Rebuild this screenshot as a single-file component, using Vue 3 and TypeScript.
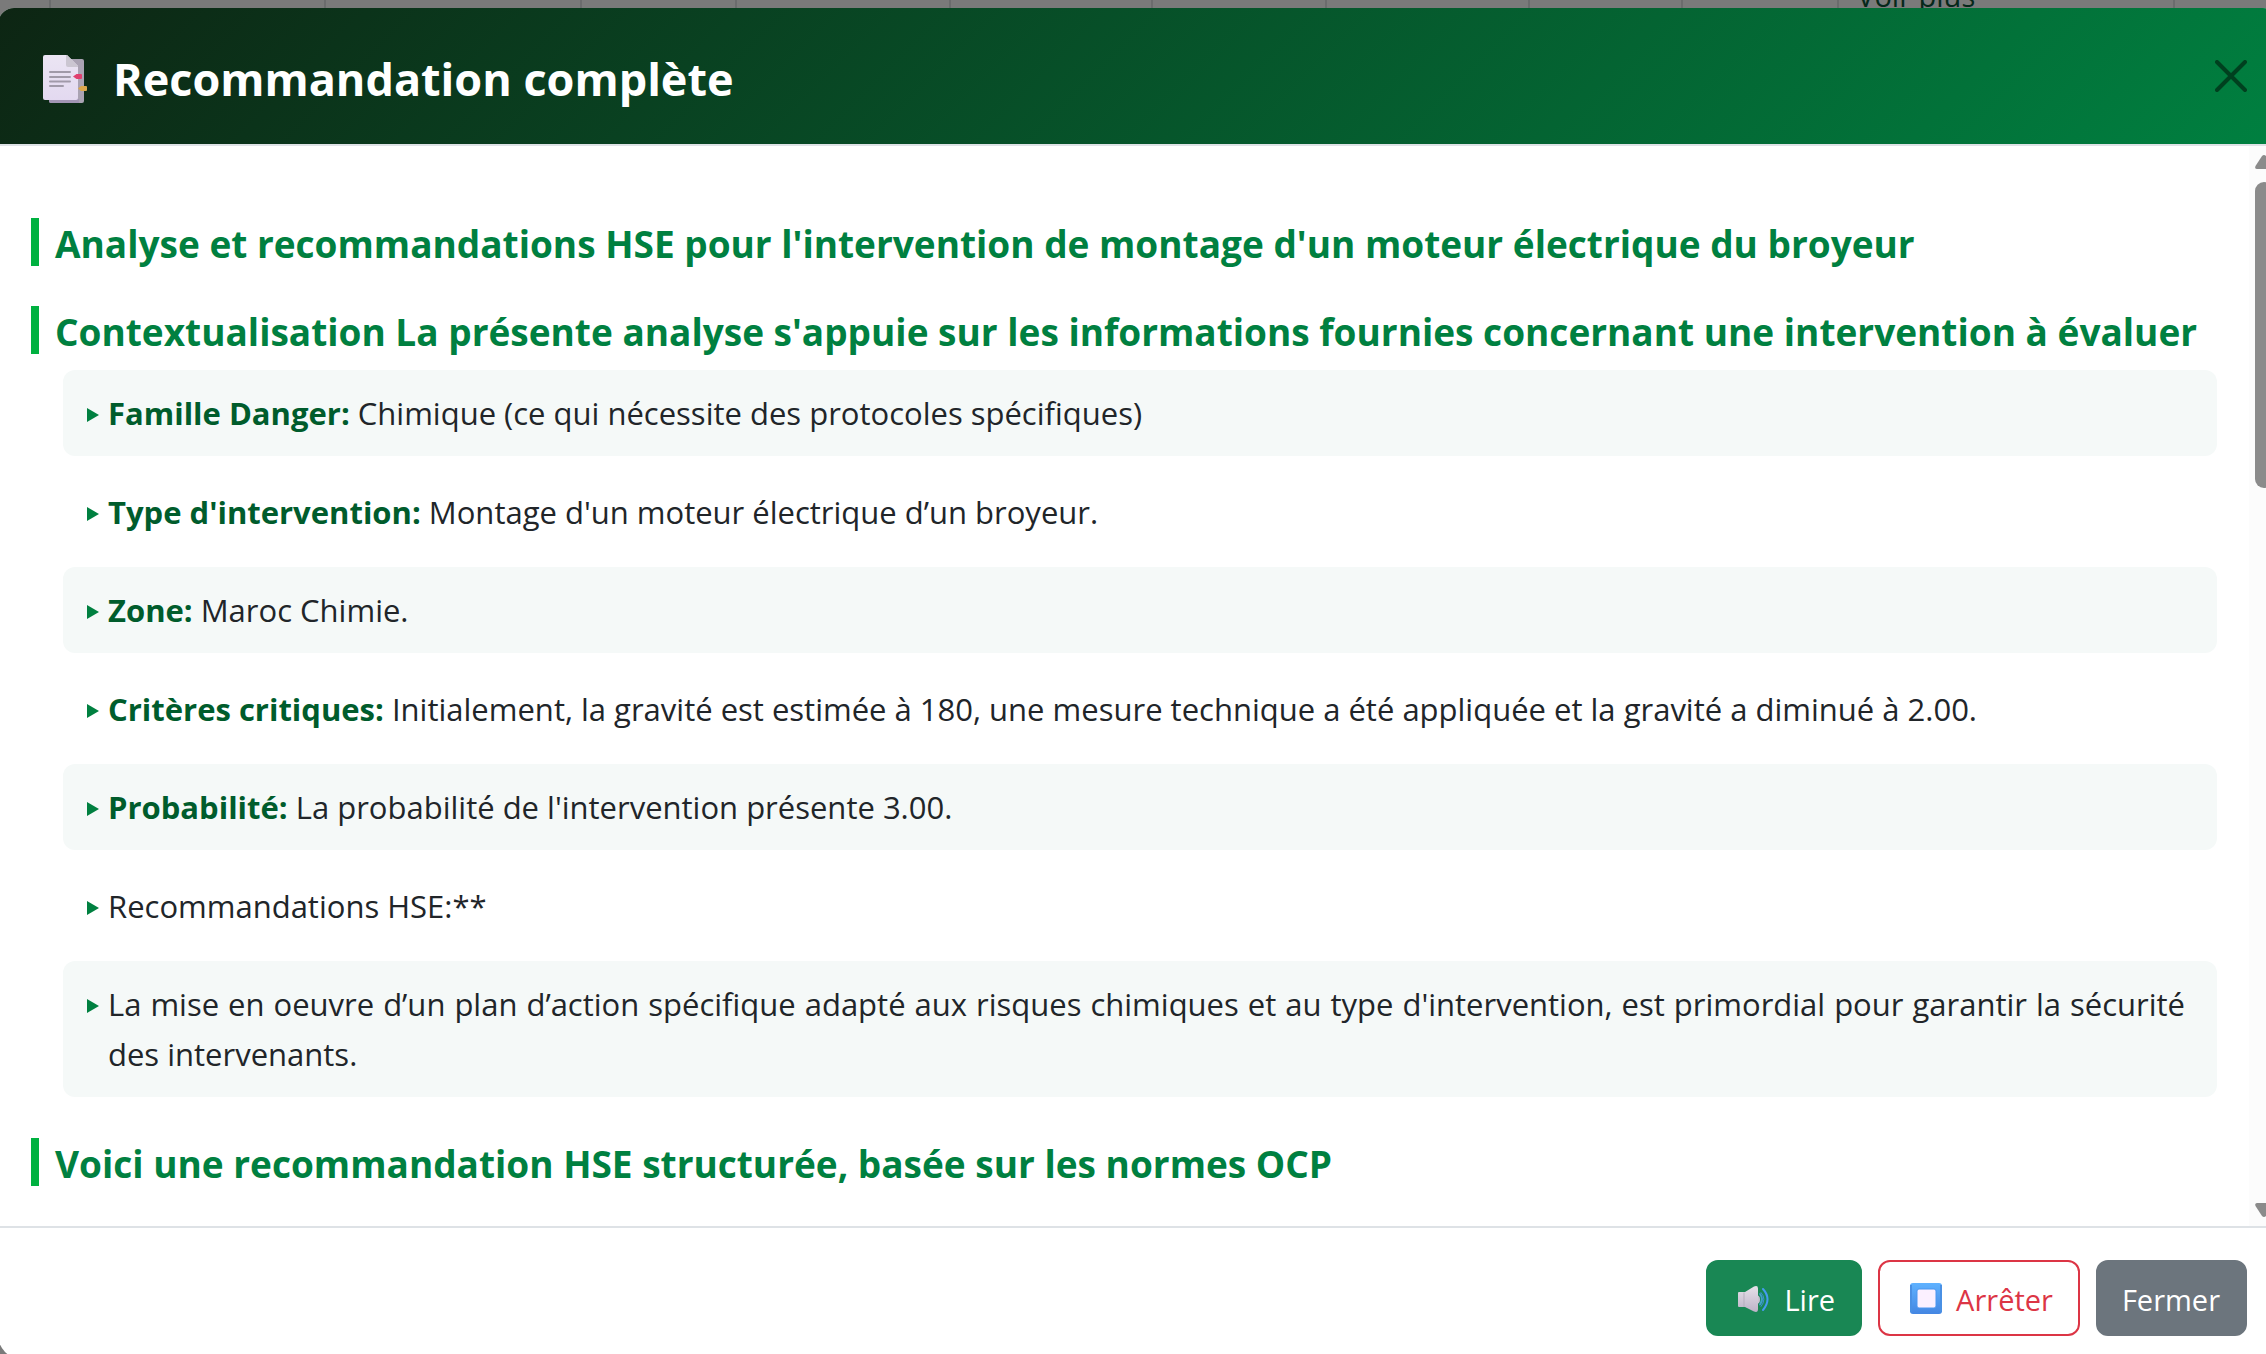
<script setup lang="ts">
interface Item {
  label?: string
  text: string
}

const columnWidths: number[] = [50, 275, 256, 155, 214, 203, 174, 203, 153, 156, 336, 104]

const introHeadings: string[] = [
  "Analyse et recommandations HSE pour l'intervention de montage d'un moteur électrique du broyeur",
  "Contextualisation La présente analyse s'appuie sur les informations fournies concernant une intervention à évaluer",
]

const items: Item[] = [
  { label: 'Famille Danger:', text: 'Chimique (ce qui nécessite des protocoles spécifiques)' },
  { label: "Type d'intervention:", text: "Montage d'un moteur électrique d’un broyeur." },
  { label: 'Zone:', text: 'Maroc Chimie.' },
  {
    label: 'Critères critiques:',
    text: 'Initialement, la gravité est estimée à 180, une mesure technique a été appliquée et la gravité a diminué à 2.00.',
  },
  { label: 'Probabilité:', text: "La probabilité de l'intervention présente 3.00." },
  { text: 'Recommandations HSE:**' },
  {
    text: "La mise en oeuvre d’un plan d’action spécifique adapté aux risques chimiques et au type d'intervention, est primordial pour garantir la sécurité des intervenants.",
  },
]
</script>

<template>
  <div class="page">
    <table class="backdrop" aria-hidden="true">
      <tbody>
        <tr>
          <td v-for="(w, i) in columnWidths" :key="i" :style="{ width: (w / 2279) * 100 + '%' }">
            <span v-if="i === 10">Voir plus</span>
          </td>
        </tr>
      </tbody>
    </table>

    <section class="modal" role="dialog" aria-modal="true" aria-labelledby="modal-title">
      <header class="modal-header">
        <svg class="doc-icon" viewBox="0 0 44 48" aria-hidden="true">
          <defs>
            <linearGradient id="sheet" x1="0" y1="0" x2="0" y2="1">
              <stop offset="0" stop-color="#ebe5f3" />
              <stop offset="1" stop-color="#e3d9f0" />
            </linearGradient>
          </defs>
          <rect x="6" y="4" width="35" height="44" rx="2" fill="#aaa3b3" />
          <path d="M6 44h30v4H8q-2 0-2-2z" fill="#a295b4" />
          <path d="M2 0H24L35 11V43q0 2-2 2H2q-2 0-2-2V2Q0 0 2 0z" fill="url(#sheet)" />
          <path d="M24 0L35 11V12H25q-2 0-2-2V0z" fill="#cbc6d1" />
          <path d="M7 17H27M7 22H27M7 26.500H27M7 31H20" stroke="#a19aa9" stroke-width="2" stroke-linecap="round" />
          <path d="M30 21.500L33.500 19H38q1 0 1 1v3q0 1-1 1H33.500z" fill="#e0406f" />
          <path d="M35 33.500L38 31H43q1 0 1 1v3q0 1-1 1H38z" fill="#dba84c" />
        </svg>
        <h1 id="modal-title">Recommandation complète</h1>
        <button class="close" type="button" aria-label="Fermer la fenêtre">
          <svg viewBox="0 0 32 32" aria-hidden="true">
            <path d="M2 2L30 30M30 2L2 30" stroke="#00401f" stroke-width="4" stroke-linecap="round" />
          </svg>
        </button>
      </header>

      <div class="modal-body">
        <main class="content">
          <h2 v-for="h in introHeadings" :key="h">{{ h }}</h2>
          <ul>
            <li v-for="item in items" :key="item.text">
              <p><strong v-if="item.label">{{ item.label }}</strong> {{ item.text }}</p>
            </li>
          </ul>
          <h2>Voici une recommandation HSE structurée, basée sur les normes OCP</h2>
        </main>
        <div class="scrollbar" aria-hidden="true">
          <svg viewBox="0 0 18 14"><path d="M7 1Q9-1 11 1L17.500 11Q18.500 14 16 14H2Q-.5 14 .5 11z" fill="#8b8b8b" /></svg>
          <div class="track"><div class="thumb"></div></div>
          <svg viewBox="0 0 18 14"><path d="M7 13Q9 15 11 13L17.500 3Q18.500 0 16 0H2Q-.5 0 .5 3z" fill="#8b8b8b" /></svg>
        </div>
      </div>

      <footer class="modal-footer">
        <button class="btn read" type="button">
          <svg viewBox="0 0 32 32" aria-hidden="true">
            <defs>
              <linearGradient id="cone" x1="0" y1="0" x2="0" y2="1">
                <stop offset="0" stop-color="#e6e1e9" />
                <stop offset="1" stop-color="#bdb2c8" />
              </linearGradient>
            </defs>
            <path d="M18 12q4 0 4 4.500T18 21z" fill="#c9c2d0" />
            <path d="M1 9H7L16 3.500q4-1.500 4 2V26q0 4-4 2.500L7 24H1q-1 0-1-1V10q0-1 1-1z" fill="url(#cone)" />
            <path d="M6 9.500V24" stroke="#b5adbd" stroke-width="1" />
            <path d="M22 11q4 5 0 10.500" fill="none" stroke="#3f9fc8" stroke-width="2" stroke-linecap="round" />
            <path d="M25 6q9 10 0 21" fill="none" stroke="#459bf0" stroke-width="2" stroke-linecap="round" />
            <path d="M23 9.500q6 6.500 0 14" fill="none" stroke="#3c8fd8" stroke-width="1" stroke-linecap="round" />
          </svg>
          Lire
        </button>
        <button class="btn stop" type="button">
          <svg viewBox="0 0 32 32" aria-hidden="true">
            <defs>
              <linearGradient id="key" x1="0" y1="0" x2="0" y2="1">
                <stop offset="0" stop-color="#5fb2ff" />
                <stop offset="1" stop-color="#4486e2" />
              </linearGradient>
            </defs>
            <rect x="0" y="0" width="32" height="31" rx="3" fill="url(#key)" />
            <path d="M1 2V29M31 2V29" stroke="#4a90e4" stroke-width="2" />
            <rect x="7" y="6" width="19" height="19" rx="2" fill="#fbf0ff" stroke="#4a96f0" stroke-width="1" />
          </svg>
          Arrêter
        </button>
        <button class="btn dismiss" type="button">Fermer</button>
      </footer>
    </section>
  </div>
</template>

<style>
body {
  margin: 0;
  overflow: hidden;
  background: #7a7a7a;
}
</style>

<style scoped>
.page {
  position: relative;
  height: 100vh;
  overflow: hidden;
  background: #7a7a7a;
  color: #212529;
  font-family: "Open Sans", "Noto Sans", sans-serif;
}

.backdrop {
  position: absolute;
  top: -28px;
  left: 0;
  width: calc(100% + 13px);
  table-layout: fixed;
  border-collapse: collapse;
  font-size: 29px;
  line-height: 44px;
  color: #06281a;
}

.backdrop td {
  height: 48px;
  padding: 0 18px;
  box-sizing: border-box;
  border-right: 2px solid #6b6c6d;
}

/* The dialog runs slightly past both sides and the bottom of the window. */
.modal {
  position: relative;
  display: flex;
  flex-direction: column;
  box-sizing: border-box;
  height: calc(100vh - 3px);
  margin: 0 -13px 0 -2px;
  top: 8px;
  overflow: hidden;
  border-radius: 16px 16px 24px 24px;
  background: #fff;
}

.modal-header {
  display: flex;
  align-items: center;
  gap: 26px;
  height: 136px;
  flex: none;
  padding: 0 32px 0 45px;
  border-bottom: 2px solid #dee2e6;
  background: linear-gradient(135deg, #0d2513, #008040);
}

.doc-icon {
  width: 44px;
  height: 48px;
  margin-top: 6px;
}

h1 {
  flex: 1;
  margin: 0;
  padding-top: 6px;
  color: #fff;
  font-size: 45px;
  line-height: 60px;
  font-weight: 700;
}

.close {
  display: flex;
  padding: 0;
  border: 0;
  background: none;
}

.close svg {
  width: 32px;
  height: 32px;
}

.modal-body {
  display: flex;
  flex: 1;
  min-height: 0;
}

.content {
  flex: 1;
  min-width: 0;
  padding: 72px 32px 0 33px;
  overflow: hidden;
}

h2 {
  margin: 0 -32px 40px 0;
  padding: 4px 0 0 16px;
  border-left: 8px solid #00b140;
  color: #008040;
  font-size: 37px;
  line-height: 44px;
  font-weight: 700;
}

ul {
  margin: -24px 0 41px 32px;
  padding: 0;
  list-style: none;
}

li {
  display: flex;
  gap: 9px;
  margin-bottom: 12px;
  padding: 18px 32px 18px 24px;
  border-radius: 12px;
}

li:nth-child(odd) {
  margin-bottom: 13px;
  background: #f5f9f8;
}

li:last-child {
  margin-bottom: 0;
}

li::before {
  content: "";
  flex: none;
  width: 12px;
  height: 14px;
  margin-top: 20px;
  background: #008040;
  clip-path: polygon(0 0, 100% 50%, 0 100%);
}

p {
  flex: 1;
  margin: 0;
  font-size: 31px;
  line-height: 50px;
  text-align: justify;
}

strong {
  color: #005c2c;
  font-weight: 700;
}

.scrollbar {
  display: flex;
  flex-direction: column;
  align-items: center;
  flex: none;
  width: 30px;
  box-sizing: border-box;
  padding: 9px 0;
  background: #fcfcfc;
}

.scrollbar svg {
  width: 18px;
  height: 14px;
}

.track {
  flex: 1;
  width: 18px;
  margin: 13px 0;
}

.thumb {
  height: calc(30% + 4px);
  border-radius: 9px;
  background: #8b8b8b;
}

.modal-footer {
  display: flex;
  justify-content: flex-end;
  gap: 16px;
  flex: none;
  padding: 32px 32px 23px;
  border-top: 2px solid #dee2e6;
}

.btn {
  display: flex;
  align-items: center;
  padding: 16px 25px 12px 24px;
  border: 2px solid transparent;
  border-radius: 12px;
  font-family: inherit;
  font-size: 29px;
  line-height: 44px;
}

.btn svg {
  width: 32px;
  height: 32px;
  margin: 0 14px 2px 6px;
}

.read {
  border-color: #198754;
  background: #198754;
  color: #fff;
}

.stop {
  border-color: #dc3545;
  background: #fff;
  color: #dc3545;
}

.dismiss {
  border-color: #6c757d;
  background: #6c757d;
  color: #fff;
}
</style>
